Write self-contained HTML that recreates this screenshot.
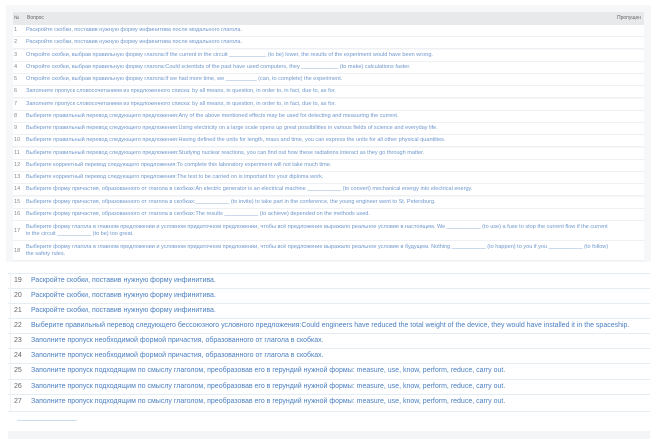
<!DOCTYPE html>
<html><head><meta charset="utf-8"><style>
body{margin:0;width:666px;height:439px;background:#fff;font-family:"Liberation Sans",sans-serif;overflow:hidden;position:relative}
.p{position:absolute;left:6px;top:5px;width:645px;height:257px;background:#f6f7f9}
.h{position:absolute;left:7px;top:7px;width:631px;height:13px;background:#e8e9eb;font-size:5px;color:#666;line-height:13px}
.r{position:absolute;left:7px;width:631px;background:#fff;border-bottom:1px solid #eef0f3;font-size:5.55px;color:#6f97cc;white-space:nowrap}
.r .n{position:absolute;left:1px;color:#888}
.r .t{position:absolute;left:13px}
.b{position:absolute;left:8px;width:642px;height:14px;border-top:1px solid #e6edf2;font-size:7px;line-height:14px;color:#4a7fc0;white-space:nowrap}
.b .n{position:absolute;left:6px;color:#666}
.b .t{position:absolute;left:23px}
</style></head><body>
<div class="p">
<div class="h"><span style="position:absolute;left:1px">№</span><span style="position:absolute;left:14px">Вопрос</span><span style="position:absolute;right:3px">Пропущен</span></div>
</div>
<div id="rows"></div>
<div style="position:absolute;left:8px;top:272px;width:642px;height:139px;border-bottom:1px solid #e6edf2"></div>
<div class="b" style="top:273px"><span class="n">19</span><span class="t">Раскройте скобки, поставив нужную форму инфинитива.</span></div>
<div class="b" style="top:288px"><span class="n">20</span><span class="t">Раскройте скобки, поставив нужную форму инфинитива.</span></div>
<div class="b" style="top:303px"><span class="n">21</span><span class="t">Раскройте скобки, поставив нужную форму инфинитива.</span></div>
<div class="b" style="top:318px"><span class="n">22</span><span class="t">Выберите правильный перевод следующего бессоюзного условного предложения:Could engineers have reduced the total weight of the device, they would have installed it in the spaceship.</span></div>
<div class="b" style="top:333px"><span class="n">23</span><span class="t">Заполните пропуск необходимой формой причастия, образованного от глагола в скобках.</span></div>
<div class="b" style="top:348px"><span class="n">24</span><span class="t">Заполните пропуск необходимой формой причастия, образованного от глагола в скобках.</span></div>
<div class="b" style="top:363px"><span class="n">25</span><span class="t">Заполните пропуск подходящим по смыслу глаголом, преобразовав его в герундий нужной формы: measure, use, know, perform, reduce, carry out.</span></div>
<div class="b" style="top:379px"><span class="n">26</span><span class="t">Заполните пропуск подходящим по смыслу глаголом, преобразовав его в герундий нужной формы: measure, use, know, perform, reduce, carry out.</span></div>
<div class="b" style="top:394px"><span class="n">27</span><span class="t">Заполните пропуск подходящим по смыслу глаголом, преобразовав его в герундий нужной формы: measure, use, know, perform, reduce, carry out.</span></div>
<div style="position:absolute;left:10px;top:272px;width:1px;height:140px;background:#f0f2f4"></div>
<div style="position:absolute;left:17px;top:420px;width:60px;height:1px;background:#c9def0"></div>
<div style="position:absolute;left:8px;top:431px;width:642px;height:8px;background:#f4f5f6"></div>
<script>
var d=[
"Раскройте скобки, поставив нужную форму инфинитива после модального глагола.",
"Раскройте скобки, поставив нужную форму инфинитива после модального глагола.",
"Откройте скобки, выбрав правильную форму глагола:If the current in the circuit ____________ (to be) lower, the results of the experiment would have been wrong.",
"Откройте скобки, выбрав правильную форму глагола:Could scientists of the past have used computers, they ____________ (to make) calculations faster.",
"Откройте скобки, выбрав правильную форму глагола:If we had more time, we __________ (can, to complete) the experiment.",
"Заполните пропуск словосочетанием из предложенного списка: by all means, in question, in order to, in fact, due to, as for.",
"Заполните пропуск словосочетанием из предложенного списка: by all means, in question, in order to, in fact, due to, as for.",
"Выберите правильный перевод следующего предложения:Any of the above mentioned effects may be used for detecting and measuring the current.",
"Выберите правильный перевод следующего предложения:Using electricity on a large scale opens up great possibilities in various fields of science and everyday life.",
"Выберите правильный перевод следующего предложения:Having defined the units for length, mass and time, you can express the units for all other physical quantities.",
"Выберите правильный перевод следующего предложения:Studying nuclear reactions, you can find out how these radiations interact as they go through matter.",
"Выберите корректный перевод следующего предложения:To complete this laboratory experiment will not take much time.",
"Выберите корректный перевод следующего предложения:The test to be carried on is important for your diploma work.",
"Выберите форму причастия, образованного от глагола в скобках:An electric generator is an electrical machine ___________ (to convert) mechanical energy into electrical energy.",
"Выберите форму причастия, образованного от глагола в скобках:___________ (to invite) to take part in the conference, the young engineer went to St. Petersburg.",
"Выберите форму причастия, образованного от глагола в скобках:The results ___________ (to achieve) depended on the methods used."];
var h="",y=25;
for(var i=0;i<16;i++){h+='<div class="r" style="top:'+y+'px;height:11.2px;line-height:11.2px"><span class="n">'+(i+1)+'</span><span class="t">'+d[i]+'</span></div>';y+=12.25;}
h+='<div class="r" style="top:'+y+'px;height:19px;line-height:6.5px"><span class="n" style="top:7px">17</span><span class="t" style="top:3px">Выберите форму глагола в главном предложении и условном придаточном предложении, чтобы всё предложение выражало реальное условие в настоящем. We ___________ (to use) a fuse to stop the current flow if the current<br>in the circuit ___________ (to be) too great.</span></div>';
y+=20;
h+='<div class="r" style="top:'+y+'px;height:19px;line-height:6.5px"><span class="n" style="top:7px">18</span><span class="t" style="top:3px">Выберите форму глагола в главном предложении и условном придаточном предложении, чтобы всё предложение выражало реальное условие в будущем. Nothing ___________ (to happen) to you if you ___________ (to follow)<br>the safety rules.</span></div>';
document.getElementById('rows').innerHTML='<div style="position:absolute;left:6px;top:0px">'+h+'</div>';
</script>
</body></html>
